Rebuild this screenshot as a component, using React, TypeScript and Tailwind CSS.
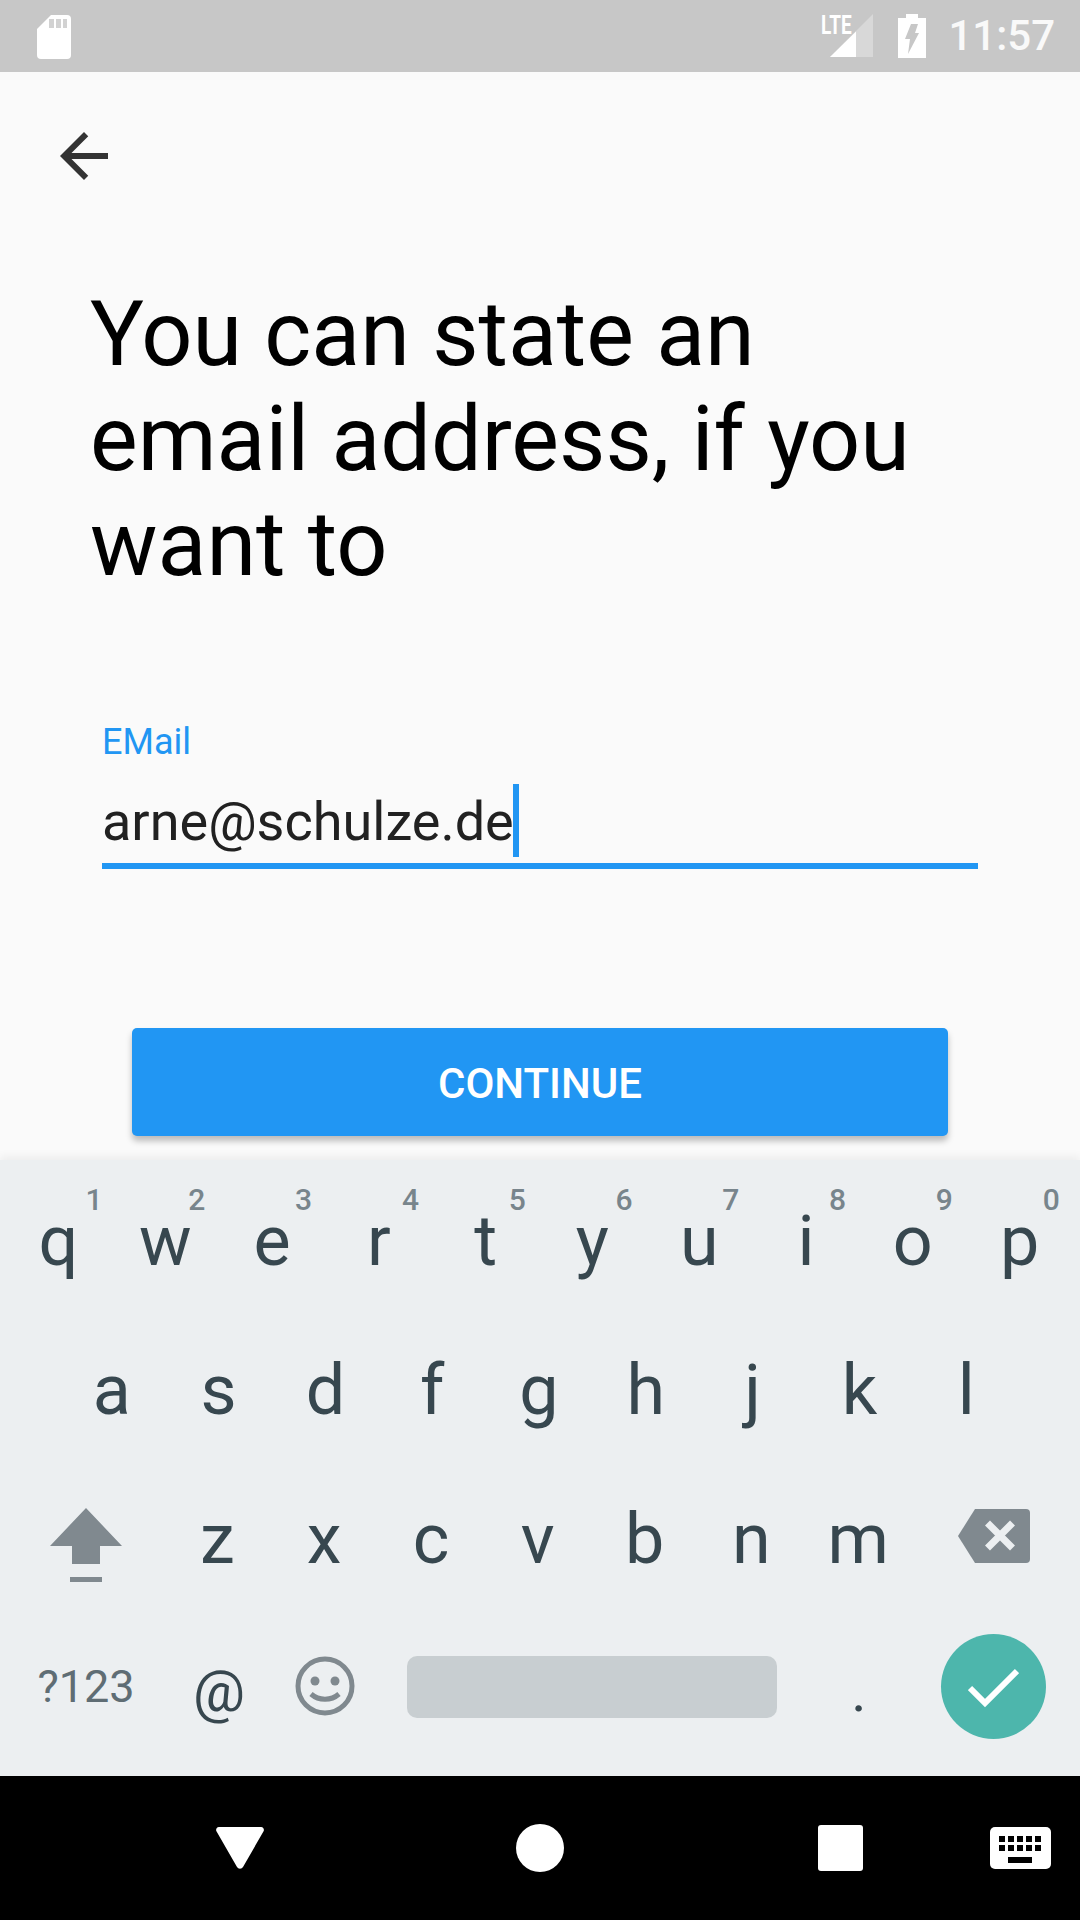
const row1 = [["q","1"],["w","2"],["e","3"],["r","4"],["t","5"],["y","6"],["u","7"],["i","8"],["o","9"],["p","0"]];
const row2 = ["a","s","d","f","g","h","j","k","l"];
const row3 = ["z","x","c","v","b","n","m"];

function Key({ k, hint }: { k: string; hint?: string }) {
  return (
    <div className="relative w-[106.8px] h-full flex items-center justify-center text-[70px] leading-none text-[#37474f]">
      <span className="pt-[13px] pr-[2px]">{k}</span>
      {hint ? <span className={`absolute ${hint === "1" ? "left-[78px]" : "left-[74px]"} w-[20px] text-center top-[25px] text-[30px] font-medium leading-none text-[#78858c]`}>{hint}</span> : null}
    </div>
  );
}

export default function App() {
  return (
    <div className="w-[1080px] h-[1920px] flex flex-col bg-[#fafafa] overflow-hidden font-['Roboto',sans-serif]">
      <div className="h-[72px] bg-[#c7c7c7] flex items-center pl-[36px] pr-[25px] shrink-0">
        <svg width="36" height="45" viewBox="0 0 36 45"><path d="M15 1h16a4 4 0 0 1 4 4v36a4 4 0 0 1-4 4H5a4 4 0 0 1-4-4V15z" fill="#fff" /><path d="M13 5h5v9h-5zM20 5h5v9h-5zM27 5h4v9h-4z" fill="#d2d2d2" /></svg>
        <div className="ml-auto relative w-[52px] h-[44px]">
          <svg className="absolute left-[9px] top-0" width="43" height="44" viewBox="0 0 43 44"><path d="M43 0v43H0z" fill="#fff" fillOpacity="0.3" /><path d="M26 17.5V43H0z" fill="#fff" /></svg>
          <span className="absolute left-0 top-[-1px] text-[25px] font-bold leading-[25px] text-white scale-x-[0.76] origin-left">LTE</span>
        </div>
        <svg className="ml-[25px]" width="28" height="44" viewBox="0 0 28 44"><path d="M8 4V0h12v4h8v40H0V4z" fill="#fff" /><path d="M13 10h7l-3 9h4L10 40l2-15H7z" fill="#c7c7c7" /></svg>
        <span className="ml-[22px] text-[42px] font-medium leading-none text-white/90">11:57</span>
      </div>

      <div className="flex-1 flex flex-col relative">
        <div className="pl-[48px] pt-[48px]">
          <svg className="block" width="72" height="72" viewBox="0 0 24 24"><path d="M20 11H7.83l5.59-5.59L12 4l-8 8 8 8 1.41-1.41L7.83 13H20v-2z" fill="#333" /></svg>
        </div>
        <h1 className="mt-[90px] ml-[90px] text-[89.9px] font-normal leading-[105px] text-black">You can state an<br />email address, if you<br />want to</h1>
        <div className="mt-[124px] mx-[102px]">
          <div className="text-[36px] leading-[42px] text-[#2196f3]">EMail</div>
          <div className="mt-[21px] h-[73px] flex items-start text-[54px] leading-[70px] text-[#212121]">
            <span className="pt-[3px]">arne@schulze.de</span>
            <span className="w-[6px] h-[73px] bg-[#2196f3] -ml-[1px]" />
          </div>
          <div className="h-[6px] mt-[6px] bg-[#2196f3]" />
        </div>
        <div className="mt-[159px] mx-[132px] h-[108px] pt-[3px] rounded-[5px] bg-[#2196f3] shadow-[0_5px_6px_rgba(0,0,0,0.25)] flex items-center justify-center text-[42px] font-medium text-white">CONTINUE</div>
      </div>

      <div className="h-[616px] shrink-0 bg-[#eceff1] shadow-[0_-4px_8px_rgba(0,0,0,0.05)] flex flex-col">
        <div className="h-[149px] flex justify-center">{row1.map(([k, h]) => <Key key={k} k={k} hint={h} />)}</div>
        <div className="h-[149px] flex justify-center">{row2.map((k) => <Key key={k} k={k} />)}</div>
        <div className="h-[149px] flex items-center pl-[7px]">
          <div className="w-[158px] h-full flex items-center justify-center pt-[25px]">
            <svg width="72" height="74" viewBox="0 0 72 74"><path d="M36 0 72 38H50v18H22V38H0z" fill="#80898f" /><path d="M20 69h32v5H20z" fill="#80898f" /></svg>
          </div>
          {row3.map((k) => <Key key={k} k={k} />)}
          <div className="w-[162px] h-full flex items-center justify-center pt-[7px]">
            <svg width="72" height="54" viewBox="0 0 72 54"><path d="M17 0h51a4 4 0 0 1 4 4v46a4 4 0 0 1-4 4H17L0 27z" fill="#80898f" /><path d="m29.500 14 25 25M54.500 14l-25 25" stroke="#eceff1" strokeWidth="7" /></svg>
          </div>
        </div>
        <div className="h-[169px] flex items-center pb-[11px]">
          <div className="w-[172px] text-center text-[45px] leading-none text-[#5f6d74]">?123</div>
          <div className="w-[94px] pt-[10px] text-center text-[58px] leading-none text-[#37474f]">@</div>
          <div className="ml-[29px] w-[60px] flex justify-center">
            <svg width="60" height="60" viewBox="0 0 60 60"><circle cx="30" cy="30" r="27" fill="none" stroke="#80898f" strokeWidth="5" /><circle cx="20" cy="25" r="4.500" fill="#80898f" /><circle cx="40" cy="25" r="4.500" fill="#80898f" /><path d="M16 38c8 7 20 7 28 0" fill="none" stroke="#80898f" strokeWidth="5" /></svg>
          </div>
          <div className="ml-[52px] mt-[2px] w-[370px] h-[62px] rounded-[10px] bg-[#c8ced1]" />
          <div className="w-[164px] pt-[10px] text-center text-[58px] leading-none text-[#37474f]">.</div>
          <div className="w-[105px] h-[105px] rounded-full bg-[#4db6ac] flex items-center justify-center pt-[3px]">
            <svg width="51" height="40" viewBox="0 0 51 40"><path d="M2 20 17 35 49 3" fill="none" stroke="#fff" strokeWidth="6" /></svg>
          </div>
        </div>
      </div>

      <div className="h-[144px] shrink-0 bg-black flex items-center relative">
        <svg className="absolute left-[216px] top-[51px]" width="48" height="42" viewBox="0 0 48 42"><path d="M3 0h42a3 3 0 0 1 2.700 4L27 40a3.400 3.400 0 0 1-6 0L.3 4A3 3 0 0 1 3 0z" fill="#fff" /></svg>
        <div className="absolute left-[516px] top-[48px] w-[48px] h-[48px] rounded-full bg-white" />
        <div className="absolute left-[818px] top-[49px] w-[45px] h-[46px] rounded-[3px] bg-white" />
        <svg className="absolute left-[990px] top-[51px]" width="61" height="42" viewBox="0 0 61 42"><rect width="61" height="42" rx="5" fill="#fff" /><path d="M9 9h6v6H9zM18 9h6v6h-6zM27 9h6v6h-6zM36 9h6v6h-6zM45 9h6v6h-6zM9 18h6v6H9zM18 18h6v6h-6zM27 18h6v6h-6zM36 18h6v6h-6zM45 18h6v6h-6zM18 30h24v6H18z" fill="#000" /></svg>
      </div>
    </div>
  );
}
